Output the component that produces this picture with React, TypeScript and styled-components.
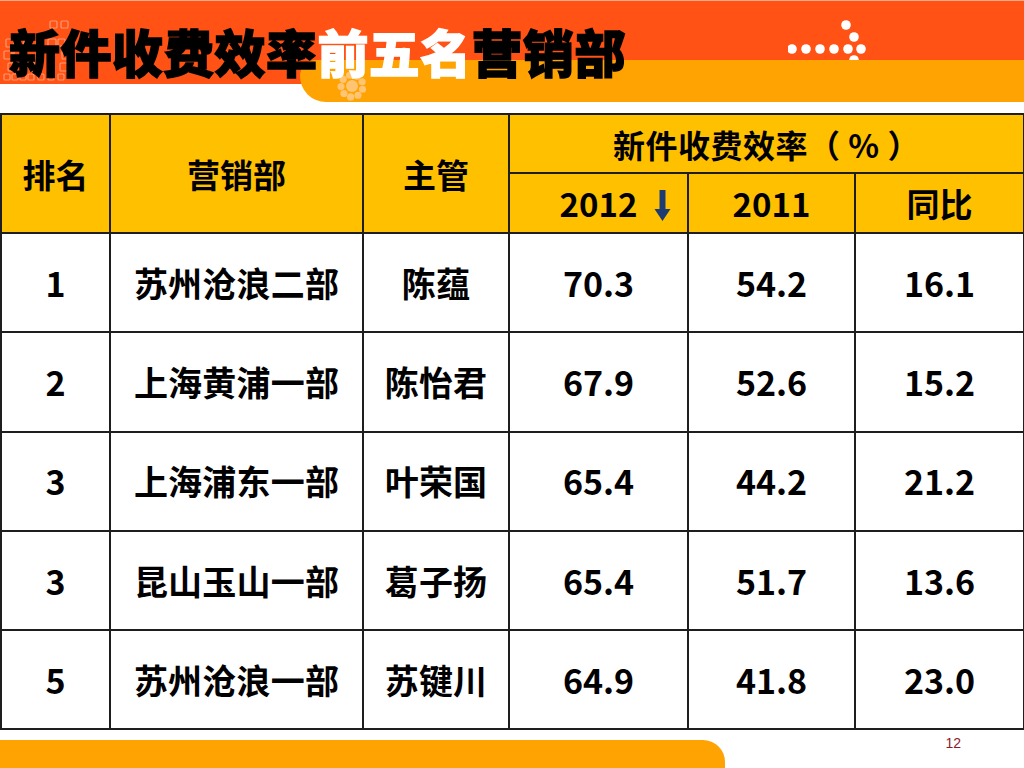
import React from 'react';
import styled, { createGlobalStyle } from 'styled-components';

const GlobalStyle = createGlobalStyle`
  html, body {
    margin: 0;
    padding: 0;
    background: #fff;
  }
  body {
    font-family: "Noto Sans CJK SC", "Liberation Sans", sans-serif;
  }
`;

const Page = styled.div`
  width: 1024px;
  height: 768px;
  display: flex;
  flex-direction: column;
  overflow: hidden;
  background: #fff;
`;

const Header = styled.header`
  position: relative;
  box-sizing: border-box;
  height: 102px;
  flex-shrink: 0;
  display: flex;
  justify-content: space-between;
  align-items: flex-start;
  border-top: 1px solid #f7a988;
  background: linear-gradient(#ff5214, #ff5214) top left / 100% 83px no-repeat, #fff;

  /* orange tab under the right part of the title */
  &::before {
    content: '';
    position: absolute;
    left: 300px;
    right: 0;
    top: 59px;
    bottom: 0;
    background: #ffa303;
    border-radius: 16px 0 0 26px;
  }
`;

const Squares = styled.svg`
  position: absolute;
  left: 2px;
  top: 16px;
  opacity: 0.5;
`;

const Flower = styled.svg`
  position: absolute;
  left: 334px;
  top: 67px;
  opacity: 0.85;
`;

const Title = styled.h1`
  position: relative;
  margin: 25px 0 0 9px;
  font-size: 51px;
  line-height: 1;
  font-weight: 900;
  letter-spacing: 0.4px;
  color: #000;
  -webkit-text-stroke: 1.4px #000;
  white-space: nowrap;
`;

const Highlight = styled.span`
  color: #fff;
  -webkit-text-stroke: 1.4px #fff;
`;

const Logo = styled.svg`
  margin: 18px 156px 0 0;
  flex-shrink: 0;
`;

const Table = styled.table`
  width: 1023px;
  margin-top: 11px;
  border-collapse: collapse;
  table-layout: fixed;
  font-family: "Noto Sans CJK SC", "Liberation Sans", sans-serif;
  font-weight: 700;
  color: #000;
`;

const HeadCell = styled.th<{ $tall?: boolean }>`
  box-sizing: border-box;
  height: ${p => (p.$tall ? '59px' : '60px')};
  padding: 0;
  background: #ffc000;
  border: 2px solid #1e1e1e;
  font-size: 33px;
  line-height: 40px;
  font-weight: 700;
  text-align: center;
  vertical-align: middle;
`;

const GroupCell = styled(HeadCell)`
  font-size: 32px;
  letter-spacing: 0.5px;
`;

const Sorted = styled.span`
  position: relative;
  display: inline-block;
`;

const SortArrow = styled.svg`
  position: absolute;
  left: calc(100% + 17px);
  top: 50%;
  transform: translateY(-42%);
`;

const Cell = styled.td<{ $num?: boolean }>`
  box-sizing: border-box;
  height: 99.3px;
  padding: 0;
  border: 2px solid #1e1e1e;
  background: #fff;
  font-size: 34px;
  line-height: 40px;
  letter-spacing: ${p => (p.$num ? '0' : '0.2px')};
  text-align: center;
  vertical-align: middle;
  white-space: nowrap;
`;

const Footer = styled.footer`
  flex: 1;
  display: flex;
  justify-content: space-between;
`;

const Bar = styled.div`
  align-self: flex-end;
  width: 725px;
  height: 28px;
  background: #ffa303;
  border-radius: 0 22px 0 0;
`;

const PageNo = styled.span`
  margin: 5px 63px 0 0;
  font-family: "Liberation Sans", sans-serif;
  font-size: 14px;
  color: #8b1a2a;
`;

interface Row {
  rank: string;
  dept: string;
  head: string;
  y2012: string;
  y2011: string;
  diff: string;
}

const rows: Row[] = [
  { rank: '1', dept: '苏州沧浪二部', head: '陈蕴', y2012: '70.3', y2011: '54.2', diff: '16.1' },
  { rank: '2', dept: '上海黄浦一部', head: '陈怡君', y2012: '67.9', y2011: '52.6', diff: '15.2' },
  { rank: '3', dept: '上海浦东一部', head: '叶荣国', y2012: '65.4', y2011: '44.2', diff: '21.2' },
  { rank: '3', dept: '昆山玉山一部', head: '葛子扬', y2012: '65.4', y2011: '51.7', diff: '13.6' },
  { rank: '5', dept: '苏州沧浪一部', head: '苏键川', y2012: '64.9', y2011: '41.8', diff: '23.0' },
];

const squares: [number, number, number, number][] = [
  [48, 4, 7, 7], [59, 4, 7, 7],
  [4, 22, 8, 8], [14, 22, 8, 8], [46, 22, 8, 8], [56, 22, 7, 7],
  [2, 34, 8, 8], [12, 34, 8, 8], [60, 34, 8, 8],
  [6, 46, 8, 8], [28, 46, 8, 8], [58, 46, 8, 8],
  [2, 57, 6, 6], [10, 57, 6, 6], [18, 57, 6, 6], [26, 57, 6, 6], [36, 57, 6, 6], [46, 57, 6, 6], [56, 57, 6, 6],
];

const petals = Array.from({ length: 9 }, (_, i) => {
  const a = (Math.PI * 2 * i) / 9 + 0.3;
  return { cx: 18 + Math.cos(a) * 11, cy: 18 + Math.sin(a) * 11 };
});

export default function App() {
  return (
    <Page>
      <GlobalStyle />
      <Header>
        <Squares width="76" height="70" viewBox="0 0 76 70">
          {squares.map(([x, y, w, h], i) => (
            <rect key={i} x={x} y={y} width={w} height={h} rx="1" fill="none" stroke="#ffe2d2" strokeWidth="1.2" />
          ))}
        </Squares>
        <Flower width="36" height="36" viewBox="0 0 36 36">
          {petals.map((p, i) => (
            <circle key={i} cx={p.cx} cy={p.cy} r="3.6" fill="#ffcb86" />
          ))}
          <circle cx="18" cy="18" r="6" fill="#ffcb86" />
        </Flower>
        <Title>
          新件收费效率<Highlight>前五名</Highlight>营销部
        </Title>
        <Logo width="80" height="41" viewBox="0 0 80 41">
          {[4, 18, 32, 46, 60, 73].map(x => (
            <circle key={x} cx={x} cy="30" r="4.8" fill="#fff" />
          ))}
          <circle cx="58" cy="6" r="4.8" fill="#fff" />
          <circle cx="66" cy="18" r="4.8" fill="#fff" />
          <circle cx="66" cy="41" r="4.8" fill="#fff" />
        </Logo>
      </Header>

      <Table>
        <colgroup>
          <col style={{ width: 109 }} />
          <col style={{ width: 253 }} />
          <col style={{ width: 146 }} />
          <col style={{ width: 179 }} />
          <col style={{ width: 167 }} />
          <col style={{ width: 169 }} />
        </colgroup>
        <thead>
          <tr>
            <HeadCell rowSpan={2}>排名</HeadCell>
            <HeadCell rowSpan={2}>营销部</HeadCell>
            <HeadCell rowSpan={2}>主管</HeadCell>
            <GroupCell colSpan={3} $tall>新件收费效率（ % ）</GroupCell>
          </tr>
          <tr>
            <HeadCell>
              <Sorted>
                2012
                <SortArrow width="17" height="31" viewBox="0 0 17 31">
                  <path d="M5.5 0 H11.5 V19 H16.5 L8.5 31 L0.5 19 H5.5 Z" fill="#1f3c72" />
                </SortArrow>
              </Sorted>
            </HeadCell>
            <HeadCell>2011</HeadCell>
            <HeadCell>同比</HeadCell>
          </tr>
        </thead>
        <tbody>
          {rows.map((r, i) => (
            <tr key={i}>
              <Cell $num>{r.rank}</Cell>
              <Cell>{r.dept}</Cell>
              <Cell>{r.head}</Cell>
              <Cell $num>{r.y2012}</Cell>
              <Cell $num>{r.y2011}</Cell>
              <Cell $num>{r.diff}</Cell>
            </tr>
          ))}
        </tbody>
      </Table>

      <Footer>
        <Bar />
        <PageNo>12</PageNo>
      </Footer>
    </Page>
  );
}
